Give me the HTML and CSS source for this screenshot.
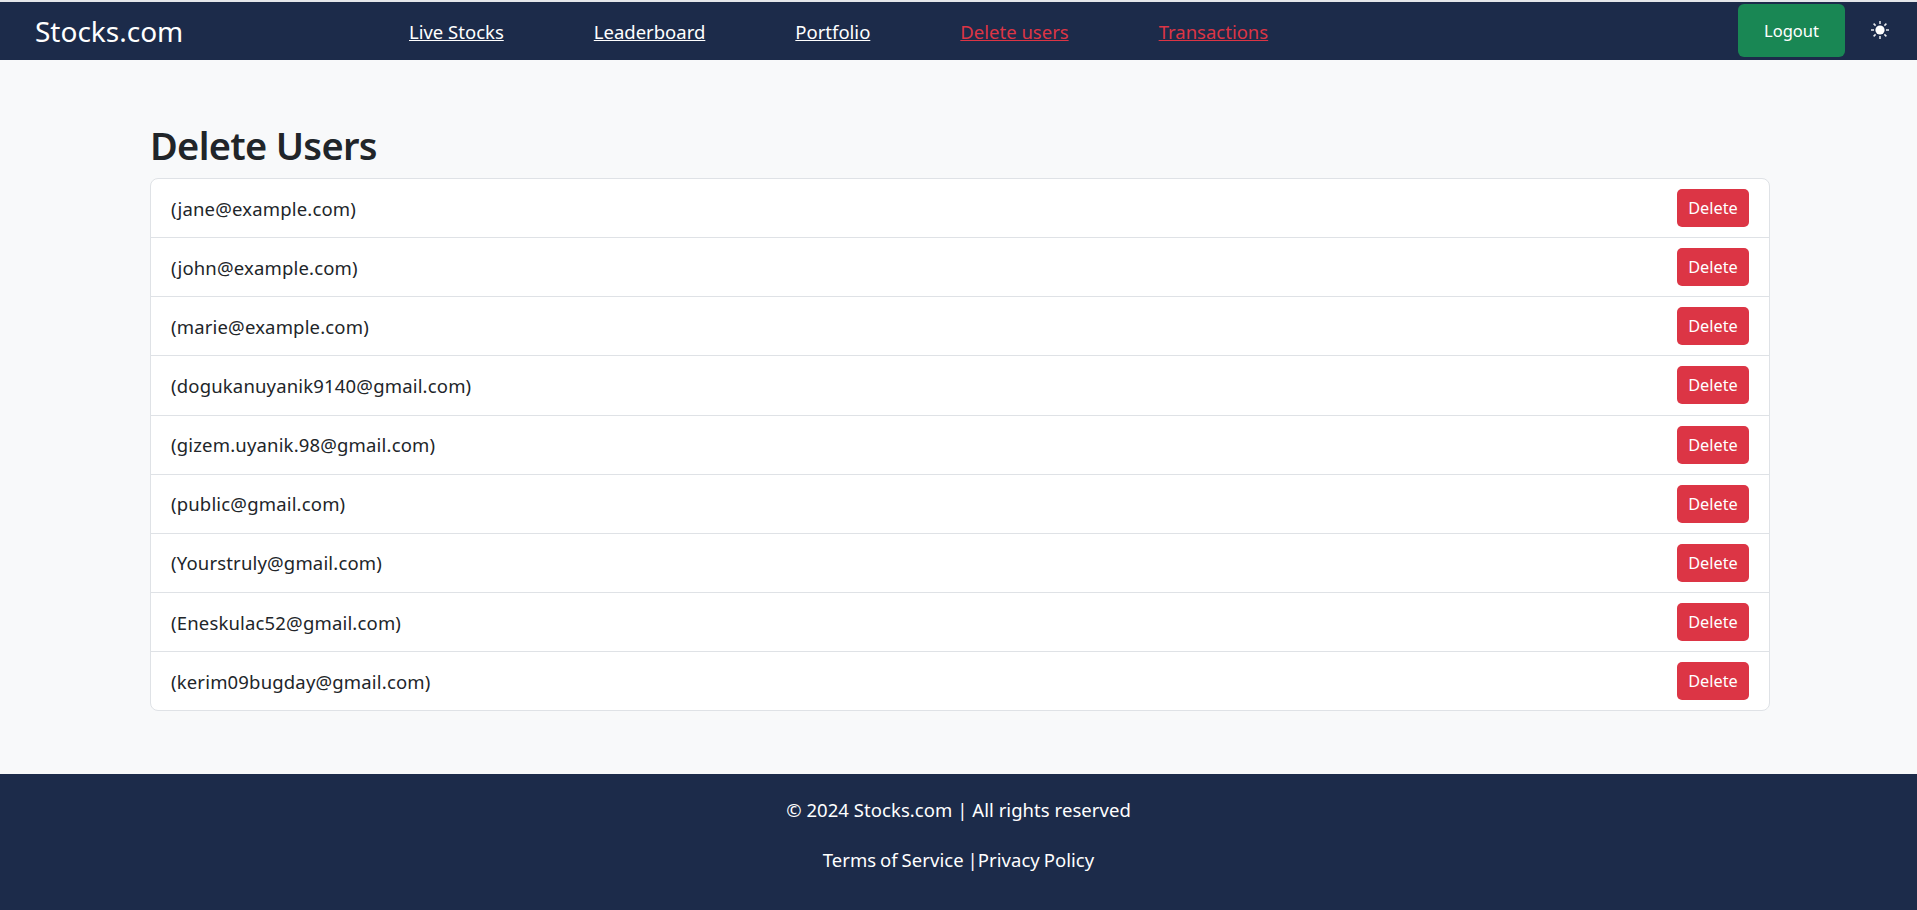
FILE: index.html
```html
<!DOCTYPE html>
<html lang="en">
<head>
<meta charset="utf-8">
<title>Stocks.com</title>
<link rel="stylesheet" href="styles.css">
</head>
<body>
<nav class="navbar">
  <a class="brand" href="#">Stocks.com</a>
  <div class="nav-links">
    <a class="nav-link" href="#">Live Stocks</a>
    <a class="nav-link" href="#">Leaderboard</a>
    <a class="nav-link" href="#">Portfolio</a>
    <a class="nav-link admin" href="#">Delete users</a>
    <a class="nav-link admin" href="#">Transactions</a>
  </div>
  <button class="logout">Logout</button>
  <span class="theme">
    <svg viewBox="0 0 18 18" width="18" height="18" aria-hidden="true">
      <circle cx="9" cy="9" r="4.6" fill="#fff"/>
      <path d="M9 0v3M9 15v3M0 9h3M15 9h3M2.6 2.6l2 2M13.4 13.4l2 2M2.6 15.4l2-2M13.4 4.6l2-2" stroke="#e8eaee" stroke-width="1.5" fill="none"/>
    </svg>
  </span>
</nav>
<main class="content">
  <h1 class="title">Delete Users</h1>
  <ul class="users">
    <li class="user"><span class="email">(jane@example.com)</span><button class="del">Delete</button></li>
    <li class="user"><span class="email">(john@example.com)</span><button class="del">Delete</button></li>
    <li class="user"><span class="email">(marie@example.com)</span><button class="del">Delete</button></li>
    <li class="user"><span class="email">(dogukanuyanik9140@gmail.com)</span><button class="del">Delete</button></li>
    <li class="user"><span class="email">(gizem.uyanik.98@gmail.com)</span><button class="del">Delete</button></li>
    <li class="user"><span class="email">(public@gmail.com)</span><button class="del">Delete</button></li>
    <li class="user"><span class="email">(Yourstruly@gmail.com)</span><button class="del">Delete</button></li>
    <li class="user"><span class="email">(Eneskulac52@gmail.com)</span><button class="del">Delete</button></li>
    <li class="user"><span class="email">(kerim09bugday@gmail.com)</span><button class="del">Delete</button></li>
  </ul>
</main>
<footer class="footer">
  <p class="foot-line">© 2024 Stocks.com | All rights reserved</p>
  <p class="foot-line foot-links"><a href="#">Terms of Service</a> |<a href="#">Privacy Policy</a></p>
</footer>
</body>
</html>
```
FILE: styles.css
```css
* { box-sizing: border-box; }
html, body { margin: 0; height: 100%; }
body {
  display: flex;
  flex-direction: column;
  min-height: 910px;
  background: #f8f9fa;
  color: #212529;
  font-family: "Noto Sans", "Open Sans", sans-serif;
  font-size: 18.5px;
  border-top: 2px solid #e4e6ea;
  overflow: hidden;
}
a { color: inherit; }
.navbar {
  flex: none;
  height: 58px;
  background: #1c2b4a;
  display: flex;
  align-items: center;
  color: #fff;
  padding-left: 35px;
}
.brand {
  font-size: 28px;
  text-decoration: none;
  width: 374px;
}
.nav-links { display: flex; gap: 90px; flex: 1; }
.nav-link { color: #fff; font-size: 18.5px; }
.nav-link.admin { color: #dc3545; }
.logout {
  font: inherit;
  font-size: 16.5px;
  color: #fff;
  background: #198754;
  border: 0;
  border-radius: 6px;
  width: 107px;
  height: 53px;
  margin-bottom: 1px;
}
.theme { display: flex; margin: 0 28px 2px 26px; }
.content { flex: 1; padding: 61px 147px 0 150px; }
.title { margin: 0 0 9px; font-size: 38px; letter-spacing: -0.7px; line-height: 48px; font-weight: 600; }
.users {
  list-style: none;
  margin: 0;
  padding: 0;
  background: #fff;
  border: 1px solid #dfe2e6;
  border-radius: 8px;
}
.user {
  display: flex;
  align-items: center;
  justify-content: space-between;
  padding: 10px 20px;
  height: 59.15px;
  border-top: 1px solid #dfe2e6;
}
.user:first-child { border-top: 0; height: 58.15px; }
.email { letter-spacing: 0.17px; }
.del {
  font: inherit;
  font-size: 16.3px;
  color: #fff;
  background: #dc3545;
  border: 0;
  border-radius: 5px;
  width: 72px;
  height: 38px;
}
.footer {
  flex: none;
  height: 136px;
  background: #1c2b4a;
  color: #fff;
  text-align: center;
  padding-top: 24px;
}
.foot-line { margin: 0 0 26px; line-height: 24px; letter-spacing: 0.05px; }
.foot-links { word-spacing: -1px; }
.foot-line a { text-decoration: none; }
```
